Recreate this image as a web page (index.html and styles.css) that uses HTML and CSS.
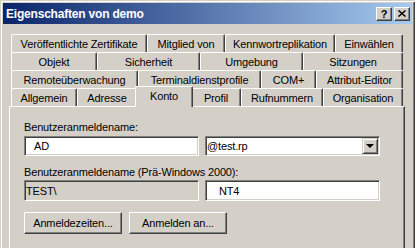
FILE: index.html
```html
<!DOCTYPE html>
<html lang="de">
<head>
    <meta charset="UTF-8">
    <title>Eigenschaften von demo</title>
    <link rel="stylesheet" href="styles.css">
</head>
<body>
<div class="window">
    <div class="titlebar">
        <span class="title">Eigenschaften von demo</span>
        <button class="cap-btn help">?</button>
        <button class="cap-btn close">
            <svg width="8" height="7" viewBox="0 0 8 7"><path d="M0.5 0.5L7.5 6.5M7.5 0.5L0.5 6.5" stroke="#000" stroke-width="1.5"/></svg>
        </button>
    </div>

    <div class="client">
        <div class="tabs">
            <div class="tab-row row1">
                <div class="tab">Veröffentlichte Zertifikate</div>
                <div class="tab">Mitglied von</div>
                <div class="tab">Kennwortreplikation</div>
                <div class="tab">Einwählen</div>
            </div>
            <div class="tab-row row2">
                <div class="tab">Objekt</div>
                <div class="tab">Sicherheit</div>
                <div class="tab">Umgebung</div>
                <div class="tab">Sitzungen</div>
            </div>
            <div class="tab-row row3">
                <div class="tab">Remoteüberwachung</div>
                <div class="tab">Terminaldienstprofile</div>
                <div class="tab">COM+</div>
                <div class="tab">Attribut-Editor</div>
            </div>
            <div class="tab-row row4">
                <div class="tab">Allgemein</div>
                <div class="tab">Adresse</div>
                <div class="tab active">Konto</div>
                <div class="tab">Profil</div>
                <div class="tab">Rufnummern</div>
                <div class="tab">Organisation</div>
            </div>
        </div>

        <div class="panel">
            <div class="label">Benutzeranmeldename:</div>
            <div class="field-row">
                <div class="field pad-ad">AD</div>
                <div class="field combo">
                    <span class="combo-text">@test.rp</span>
                    <span class="drop-btn"><span class="arrow"></span></span>
                </div>
            </div>

            <div class="label label-2">Benutzeranmeldename (Prä-Windows 2000):</div>
            <div class="field-row tall">
                <div class="field readonly">TEST\</div>
                <div class="field pad-nt">NT4</div>
            </div>

            <div class="button-row">
                <button class="btn">Anmeldezeiten...</button>
                <button class="btn">Anmelden an...</button>
            </div>
        </div>
    </div>
</div>
</body>
</html>
```

FILE: styles.css
```css
body {
    margin: 0;
    background-color: #d4d0c8;
    font-family: "Liberation Sans", Arial, sans-serif;
    font-size: 11px;
    letter-spacing: -0.15px;
    color: #000;
    overflow: hidden;
}

/* window frame: bottom edge is cut off by the screenshot */
.window {
    width: 415px;
    height: 248px;
    box-sizing: border-box;
    display: flex;
    flex-direction: column;
    padding: 3px 3px 0;
    overflow: hidden;
    box-shadow: inset 1px 1px #d4d0c8, inset 2px 2px #fff, inset -1px 0 #404040, inset -2px 0 #808080;
}

/* title bar */
.titlebar {
    height: 21px;
    flex-shrink: 0;
    display: flex;
    align-items: center;
    gap: 2px;
    padding: 0 2px 0 3px;
    background: linear-gradient(to right, #0a246a, #a6caf0);
    color: #fff;
}
.title {
    flex: 1;
    font-weight: bold;
    font-size: 12px;
    letter-spacing: -0.2px;
}
.cap-btn {
    width: 16px;
    height: 14px;
    box-sizing: border-box;
    padding: 0;
    display: flex;
    align-items: center;
    justify-content: center;
    background-color: #d4d0c8;
    border: 1px solid;
    border-color: #fff #404040 #404040 #fff;
    box-shadow: inset -1px -1px #808080;
    font-family: "Liberation Sans", Arial, sans-serif;
    font-weight: bold;
    font-size: 11px;
    color: #000;
}
.cap-btn svg {
    display: block;
}

/* tabs */
.client {
    flex: 1;
    display: flex;
    flex-direction: column;
    padding: 10px 7px 0 6px;
}
.tabs {
    margin: 0 2px;
}
.tab-row {
    display: grid;
    height: 18px;
}
.row1 { grid-template-columns: 136px 78px 110px 68px; }
.row2 { grid-template-columns: 86px 103px 103px 100px; }
.row3 { grid-template-columns: 127px 123px 55px 87px; }
.row4 { grid-template-columns: 66px 60px 54px 50px 82px 80px; }

.tab {
    height: 18px;
    box-sizing: border-box;
    padding-top: 2px;
    line-height: 14px;
    text-align: center;
    white-space: nowrap;
    background-color: #d4d0c8;
    border-top: 1px solid #fff;
    border-left: 1px solid #fff;
    border-right: 1px solid #404040;
    border-radius: 2px 2px 0 0;
    box-shadow: inset -1px 0 #808080;
}
.tab.active {
    height: auto;
    margin: -2px -2px -1px;
    position: relative;
    z-index: 1;
}

/* page */
.panel {
    flex: 1;
    padding: 14px 14px 0;
    border-top: 1px solid #fff;
    border-left: 1px solid #fff;
    border-right: 1px solid #404040;
    box-shadow: inset -1px 0 #808080;
}
.label {
    height: 13px;
    line-height: 13px;
    margin-bottom: 2px;
}
.label-2 {
    margin-top: 10px;
    margin-bottom: 1px;
}
.field-row {
    display: flex;
    gap: 6px;
    height: 20px;
}
.field-row.tall {
    height: 21px;
}
.field {
    width: 175px;
    box-sizing: border-box;
    display: flex;
    align-items: center;
    background-color: #fff;
    border: 1px solid;
    border-color: #808080 #fff #fff #808080;
    box-shadow: inset 1px 1px #404040, inset -1px -1px #d4d0c8;
    padding-left: 1px;
}
.field.readonly {
    background-color: #d4d0c8;
}
.pad-ad { padding-left: 9px; }
.pad-nt { padding-left: 13px; }

.combo {
    padding-right: 1px;
}
.combo-text {
    flex: 1;
}
.drop-btn {
    width: 16px;
    height: 16px;
    box-sizing: border-box;
    display: flex;
    align-items: center;
    justify-content: center;
    background-color: #d4d0c8;
    border: 1px solid;
    border-color: #d4d0c8 #404040 #404040 #d4d0c8;
    box-shadow: inset 1px 1px #fff, inset -1px -1px #808080;
}
.arrow {
    width: 0;
    height: 0;
    border-left: 4px solid transparent;
    border-right: 4px solid transparent;
    border-top: 4px solid #000;
}

.button-row {
    display: flex;
    gap: 7px;
    margin-top: 11px;
}
.btn {
    width: 98px;
    height: 22px;
    box-sizing: border-box;
    padding: 0;
    background-color: #d4d0c8;
    border: 1px solid;
    border-color: #fff #404040 #404040 #fff;
    box-shadow: inset -1px -1px #808080;
    font-family: "Liberation Sans", Arial, sans-serif;
    font-size: 11px;
    letter-spacing: -0.15px;
    color: #000;
}
```
